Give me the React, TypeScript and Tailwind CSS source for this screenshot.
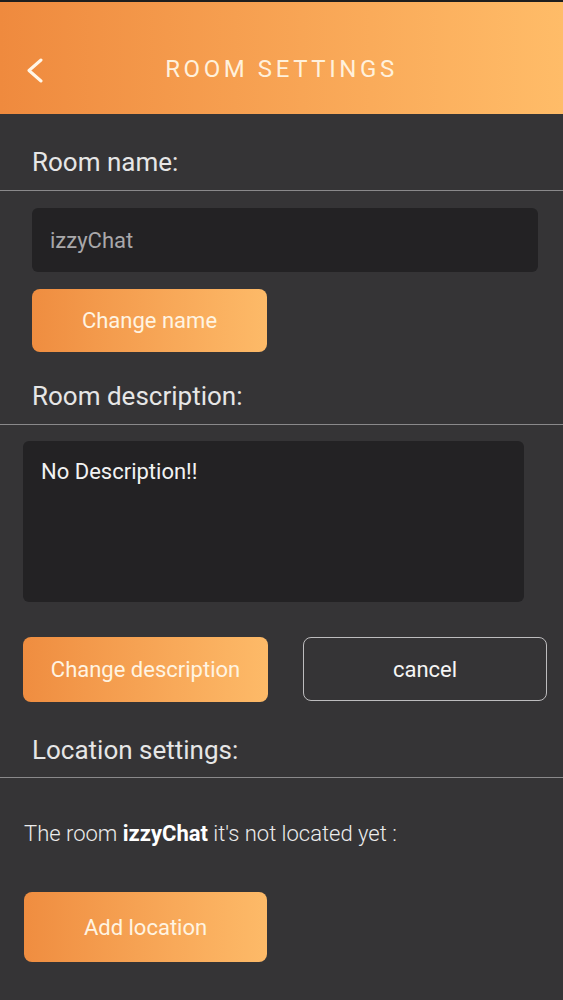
import React from "react";

const font = { fontFamily: "Roboto, 'Noto Sans', sans-serif" };

function GradButton({ children, className = "" }: { children: React.ReactNode; className?: string }) {
  return (
    <button
      className={`flex shrink-0 items-center justify-center rounded-[8px] bg-gradient-to-r from-[#ef8d40] to-[#fdba68] text-[22px] text-[#fff4e2] ${className}`}
    >
      {children}
    </button>
  );
}

function SectionTitle({ children, className = "" }: { children: React.ReactNode; className?: string }) {
  return (
    <div className={`border-b border-[#8a898b] ${className}`}>
      <div className="pl-[32px] text-[26px] font-normal leading-[30px] text-[#e6e6e6]">{children}</div>
    </div>
  );
}

export default function App() {
  return (
    <div className="min-h-[1000px] w-full bg-[#353436]" style={font}>
      <div className="h-[2px] bg-[#1e1e1e]" />
      <div className="relative flex h-[112px] items-center justify-center bg-gradient-to-r from-[#ef8a3e] to-[#ffbc68] pt-[21px]">
        <svg className="absolute left-[24px] top-[56px]" width="22" height="26" viewBox="0 0 22 26">
          <path d="M17 2 L5 12.5 L17 23" stroke="#fff6e8" strokeWidth="3" fill="none" strokeLinecap="round" strokeLinejoin="round" />
        </svg>
        <div className="text-[24px] leading-[28px] tracking-[3.6px] text-[#fff1dc]">ROOM SETTINGS</div>
      </div>

      <SectionTitle className="pt-[33px] pb-[13px]">Room name:</SectionTitle>

      <div className="px-[32px] pt-[17px]">
        <div className="flex h-[64px] w-[506px] items-center rounded-[6px] bg-[#232224] pl-[18px] text-[22px] text-[#a9a8aa]">
          izzyChat
        </div>
        <GradButton className="mt-[17px] h-[63px] w-[235px]">Change name</GradButton>
      </div>

      <SectionTitle className="pt-[29px] pb-[13px]">Room description:</SectionTitle>

      <div className="px-[23px] pt-[16px]">
        <div className="h-[161px] w-[501px] rounded-[6px] bg-[#232224] px-[18px] pt-[14px] text-[22px] text-[#f2f2f2]">
          No Description!!
        </div>
        <div className="mt-[35px] flex gap-[35px]">
          <GradButton className="h-[65px] w-[245px]">Change description</GradButton>
          <button className="flex h-[64px] w-[244px] shrink-0 items-center justify-center rounded-[8px] border border-[#bdbcbe] text-[22px] text-[#f5f5f5]">
            cancel
          </button>
        </div>
      </div>

      <SectionTitle className="pt-[33px] pb-[12px]">Location settings:</SectionTitle>

      <div className="px-[24px] pt-[41px]">
        <div className="text-[22px] font-light leading-[30px] text-[#ececec]">
          The room <span className="font-bold text-white">izzyChat</span> it's not located yet :
        </div>
        <GradButton className="mt-[43px] h-[70px] w-[243px]">Add location</GradButton>
      </div>
    </div>
  );
}
